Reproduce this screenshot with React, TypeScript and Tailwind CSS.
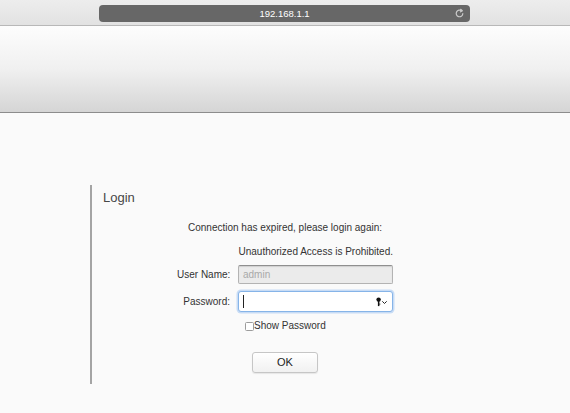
import React from 'react'

const font = { fontFamily: '"Liberation Sans", Arial, Helvetica, sans-serif' }

function ReloadIcon() {
  return (
    <svg width="11" height="11" viewBox="0 0 10 10" fill="none">
      <path d="M8 5.2a3 3 0 1 1-1.1-2.6" stroke="#c9c9c9" strokeWidth="1.1" strokeLinecap="round" />
      <path d="M6 1.2l1.6 1.3-1.7 1" stroke="#c9c9c9" strokeWidth="1.1" strokeLinecap="round" strokeLinejoin="round" />
    </svg>
  )
}

function KeyIcon() {
  return (
    <svg width="13" height="10" viewBox="0 0 13 10" fill="none">
      {/* key */}
      <circle cx="2.6" cy="2.6" r="2.2" fill="#111" />
      <rect x="1.9" y="3.5" width="1.5" height="5.6" fill="#111" />
      <rect x="3.3" y="6.6" width="1" height="1" fill="#111" />
      {/* chevron */}
      <path d="M6.6 4.6l1.9 1.9 1.9-1.9" stroke="#222" strokeWidth="1" strokeLinecap="round" strokeLinejoin="round" />
    </svg>
  )
}

export default function App() {
  return (
    <div className="w-[570px] h-[413px] overflow-hidden bg-[#fafafa] text-[#333]" style={font}>
      {/* Browser toolbar */}
      <div className="h-[26px] border-b border-[#b8b8b8] bg-gradient-to-b from-[#ededed] to-[#e2e2e2] pt-[5px] pl-[99px]">
        <div className="relative w-[371px] h-[17px] rounded-[4px] bg-[#676767] flex items-center justify-center">
          <span className="text-[9.5px] leading-none text-white">192.168.1.1</span>
          <span className="absolute right-[5px] top-[3px]">
            <ReloadIcon />
          </span>
        </div>
      </div>

      {/* Page banner */}
      <div className="h-[87px] border-b border-[#8c8c8c] bg-gradient-to-b from-[#fdfdfd] via-[#f0f0f0] to-[#d5d5d5]" />

      {/* Login panel */}
      <div className="mt-[72px] ml-[90px] w-[330px] border-l-2 border-[#a4a4a4] pt-[5px] pb-[11px]">
        <div className="pl-[11px] text-[13px] leading-[15px] text-[#474747]">Login</div>

        <div className="ml-[85px] w-[216px] text-[10px]">
          <div className="mt-[17px] leading-[12px] text-center whitespace-nowrap">
            Connection has expired, please login again:
          </div>
          <div className="mt-[12px] leading-[12px] text-right whitespace-nowrap">
            Unauthorized Access is Prohibited.
          </div>

          <div className="mt-[7px] grid grid-cols-[61px_155px] items-center">
            <label className="pr-[8px] text-right leading-[12px] whitespace-nowrap">User Name:</label>
            <div className="h-[19px] rounded-[2px] border border-[#b3b3b3] border-t-[#8f8f8f] bg-[#ebebeb] shadow-[inset_0_1px_1px_rgba(0,0,0,0.12)] pl-[4px] flex items-center text-[#a9a9a9]">
              admin
            </div>
          </div>

          <div className="mt-[7px] grid grid-cols-[61px_155px] items-center">
            <label className="pr-[8px] text-right leading-[12px] whitespace-nowrap">Password:</label>
            <div className="h-[21px] rounded-[3px] border border-[#86b4e8] bg-white shadow-[0_0_0_1.5px_rgba(140,185,240,0.45)] flex items-center justify-between pl-[4px] pr-[3px]">
              <span className="w-px h-[13px] bg-[#222]" />
              <KeyIcon />
            </div>
          </div>

          <div className="mt-[8px] grid grid-cols-[61px_155px]">
            <div />
            <div className="pl-[7px] flex items-center leading-[12px] whitespace-nowrap">
              <span className="w-[9px] h-[9px] rounded-[1.5px] border border-[#9c9c9c] bg-white" />
              <span>Show Password</span>
            </div>
          </div>

          <div className="mt-[20px] flex justify-center">
            <button className="w-[66px] h-[21px] rounded-[3px] border border-[#c6c6c6] bg-gradient-to-b from-white to-[#f1f1f1] shadow-[0_1px_1px_rgba(0,0,0,0.08)] text-[11px] text-[#222]">
              OK
            </button>
          </div>
        </div>
      </div>
    </div>
  )
}
